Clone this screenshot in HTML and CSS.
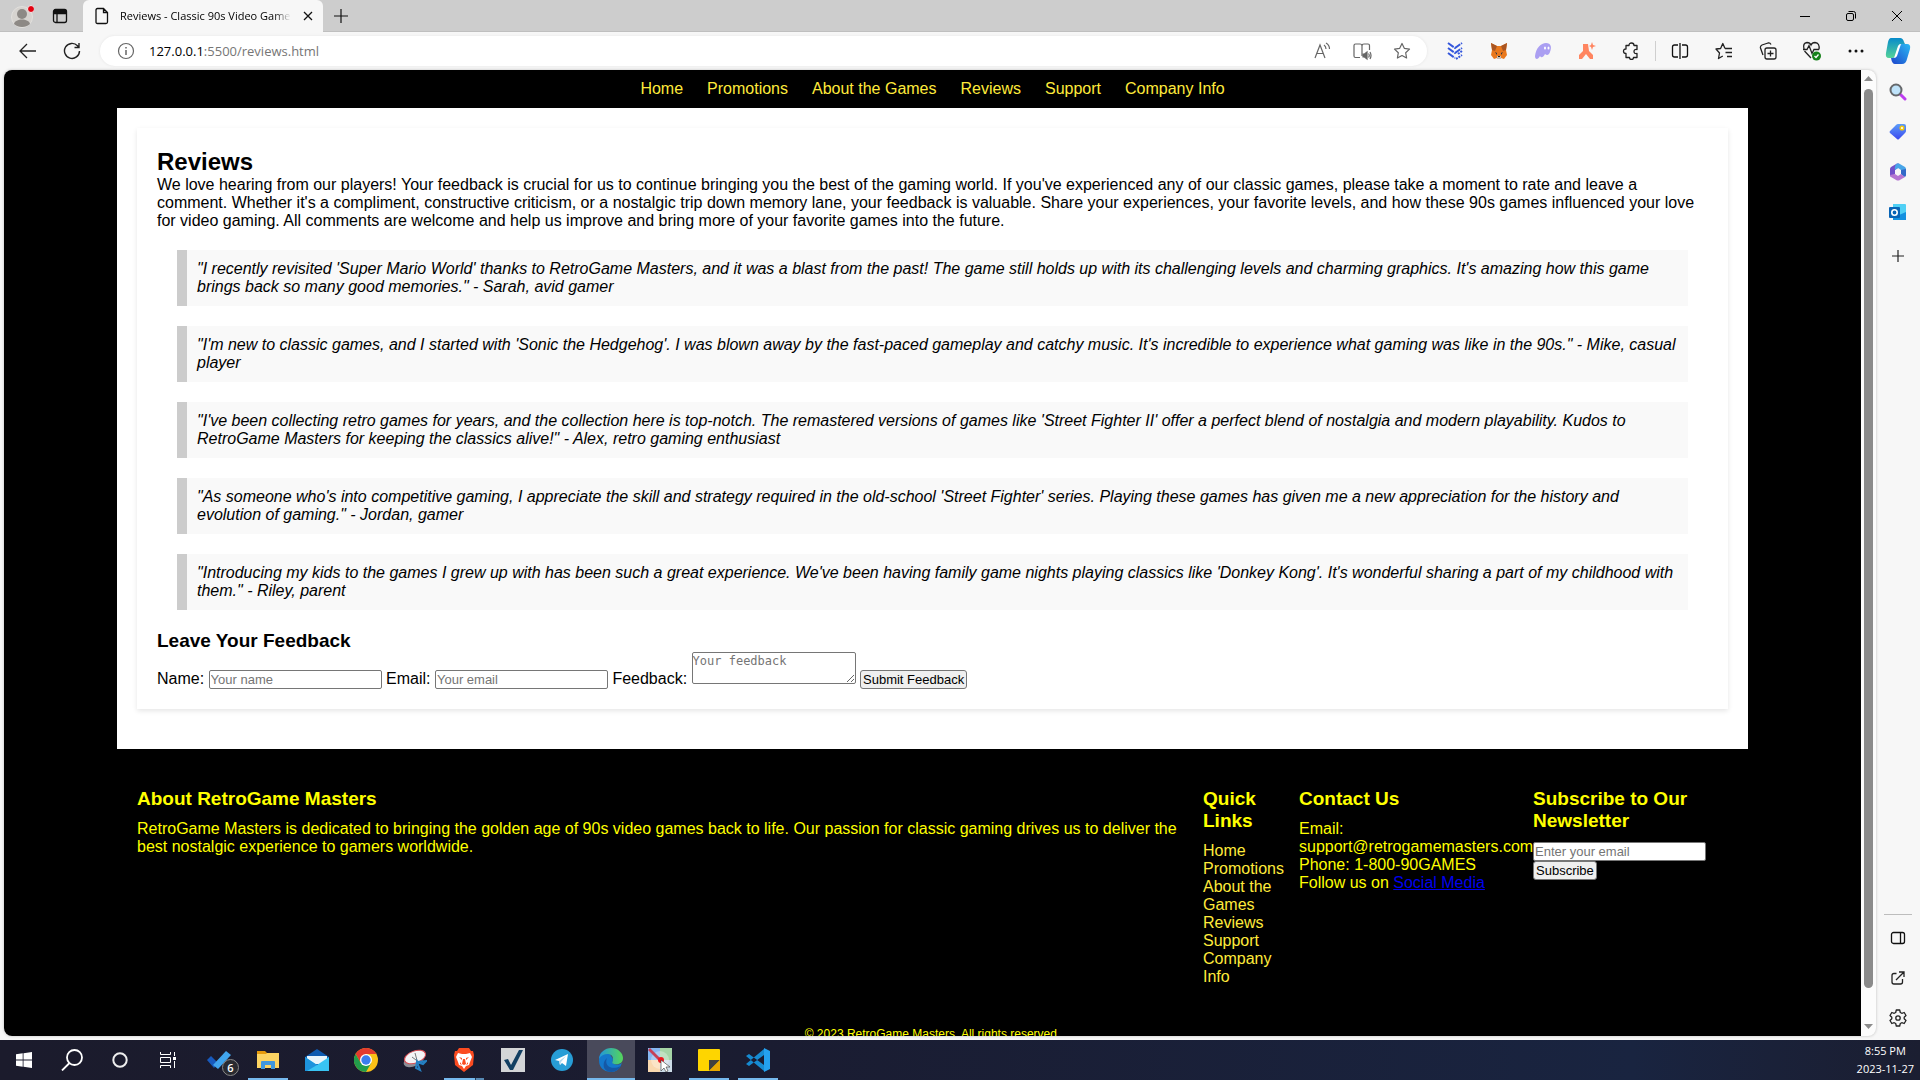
FILE: index.html
```html
<!DOCTYPE html>
<html lang="en">
<head>
<meta charset="utf-8">
<title>Reviews - Classic 90s Video Games</title>
<link rel="stylesheet" href="styles.css">
</head>
<body>
<div class="tabstrip">
  <button class="profile" aria-label="Profile"><svg width="24" height="24" viewBox="0 0 24 24"><circle cx="12" cy="13" r="10.5" fill="#d6d3cf" stroke="#e2e0dd"/><circle cx="12" cy="10" r="5" fill="#8d8985"/><path d="M4 20c1-6 15-6 16 0-4 4-12 4-16 0z" fill="#8d8985"/><circle cx="21" cy="5" r="3.5" fill="#e3000f" stroke="#eee"/></svg></button>
  <button class="workspaces" aria-label="Tab actions"><svg width="16" height="16" viewBox="0 0 16 16" fill="none" stroke="#111" stroke-width="1.3"><rect x="1.5" y="1.5" width="13" height="13" rx="2"/><path d="M1.5 5.5h13M5 5v9"/><path d="M2 3.5h12" stroke-width="4"/></svg></button>
  <div class="tab">
    <svg width="14" height="18" viewBox="0 0 14 18" fill="none" stroke="#111" stroke-width="1.3"><path d="M2.500 1.500h6l4 4v9.500q0 1.500-1.500 1.500h-8.500q-1.500 0-1.500-1.500v-12q0-1.500 1.500-1.500zM8.500 1.500v4h4"/></svg>
    <span class="tab-title">Reviews - Classic 90s Video Games</span>
    <button class="tab-close" aria-label="Close tab"><svg width="10" height="10" viewBox="0 0 10 10" stroke="#111" stroke-width="1.300"><path d="M1 1l8 8M9 1l-8 8"/></svg></button>
  </div>
  <button class="newtab" aria-label="New tab"><svg width="16" height="16" viewBox="0 0 16 16" stroke="#111" stroke-width="1.200"><path d="M8 1v14M1 8h14"/></svg></button>
  <div class="window-controls">
    <button aria-label="Minimize"><svg width="12" height="12" viewBox="0 0 12 12" stroke="#000"><path d="M1 6.500h10"/></svg></button>
    <button aria-label="Restore"><svg width="12" height="12" viewBox="0 0 12 12" fill="none" stroke="#000"><rect x="1.500" y="3.500" width="7" height="7" rx="1.500"/><path d="M3.500 1.500h5q2 0 2 2v5"/></svg></button>
    <button aria-label="Close"><svg width="12" height="12" viewBox="0 0 12 12" stroke="#000"><path d="M1 1l10 10M11 1L1 11"/></svg></button>
  </div>
</div>

<div class="toolbar">
  <button class="tool" aria-label="Back"><svg width="20" height="18" viewBox="0 0 20 18" fill="none" stroke="#222" stroke-width="1.300"><path d="M18 9H2M9 2L2 9l7 7"/></svg></button>
  <button class="tool" aria-label="Refresh"><svg width="18" height="18" viewBox="0 0 18 18" fill="none" stroke="#222" stroke-width="1.400"><path d="M16.500 9a7.500 7.500 0 1 1-2-5.200L16 5.500M16 1v4.500h-4.500"/></svg></button>
  <div class="address">
    <svg width="18" height="18" viewBox="0 0 18 18" fill="none" stroke="#666" stroke-width="1.200"><circle cx="9" cy="9" r="7.500"/><path d="M9 8v5M9 5v1.500" stroke-width="1.500"/></svg>
    <span class="url">127.0.0.1<span class="url-path">:5500/reviews.html</span></span>
    <div class="address-tools">
      <button aria-label="Read aloud"><svg width="18" height="18" viewBox="0 0 18 18" fill="none" stroke="#666" stroke-width="1.200"><path d="M2 16L7 3l5 13M4 11.500h6M11 3q2 1.500 2 4M13 1q3.500 2 3.500 6"/></svg></button>
      <button aria-label="Immersive reader"><svg width="20" height="20" viewBox="0 0 20 20" fill="none" stroke="#666" stroke-width="1.200"><path d="M8 16.500H3.500q-1.500 0-1.500-1.500V4.500Q2 3 3.500 3H8q2 0 2 2 0-2 2-2h4q1.500 0 1.500 1.500V9M10 5v10"/><path d="M11 13h1.500l2.500-2v7l-2.500-2H11z" fill="#666"/><path d="M16.500 12.500q1.500 2 0 4M18 11q2 3.500 0 7"/></svg></button>
      <button aria-label="Favorite"><svg width="18" height="18" viewBox="0 0 18 18" fill="none" stroke="#666" stroke-width="1.200" stroke-linejoin="round"><path d="M9 1.500l2.300 4.800 5.200.8-3.800 3.700.9 5.200L9 13.500 4.400 16l.9-5.200L1.500 7.100l5.200-.8z"/></svg></button>
    </div>
  </div>
  <div class="extensions">
    <button class="tool" aria-label="Extension"><svg width="16" height="18" viewBox="0 0 16 18" fill="none" stroke="#3457dc" stroke-width="2"><path d="M1 1l7 5 7-5M1 6l7 5 7-5M1 11l7 5" stroke-dasharray="7 1"/><path d="M11 12l4-3M9 17l6-4" stroke-dasharray="2 1"/></svg></button>
    <button class="tool" aria-label="MetaMask"><svg width="18" height="18" viewBox="0 0 18 18"><path d="M1 1l6 3h4l6-3-1 7 1 5-3 4-3-1H7l-3 1-3-4 1-5z" fill="#e9781c"/><path d="M1 1l6 3-2 5-3-1zM17 1l-6 3 2 5 3-1z" fill="#a95522"/><path d="M5 10l2 1v2zM13 10l-2 1v2z" fill="#263345"/><path d="M7 14h4v3H7z" fill="#c9bdb2"/><path d="M8 14h2v1H8z" fill="#222"/></svg></button>
    <button class="tool" aria-label="Phantom"><svg width="18" height="18" viewBox="0 0 18 18"><path d="M1 14C2 6 7 1 12 1c5 0 6 4 4 9-1 3-3 4-5 2-2 4-4 4-5 2-2 4-5 4-5 0z" fill="#ab9ff2"/><ellipse cx="11" cy="6" rx="1" ry="1.500" fill="#fff"/><ellipse cx="14.500" cy="6" rx="1" ry="1.500" fill="#fff"/></svg></button>
    <button class="tool" aria-label="Extension"><svg width="18" height="18" viewBox="0 0 18 18" fill="#ff8560"><path d="M5 2h5l1 7 4 4v4h-3l-4-5-4 5H1v-4l4-4zM14 0l1 3 3 1-3 1-1 3-1-3-2-1 2-1z"/></svg></button>
    <button class="tool" aria-label="Extensions"><svg width="18" height="18" viewBox="0 0 18 18" fill="none" stroke="#222" stroke-width="1.300"><path d="M4 3.500h3q0-2.500 2.500-2.500T12 3.500h3v4q-3-.5-3 2t3 2v4h-3.500q0 2-2 2t-2-2H4v-4q-2.500 0-2.500-2.300T4 7z" stroke-linejoin="round"/></svg></button>
    <span class="divider"></span>
    <button class="tool" aria-label="Split screen"><svg width="18" height="18" viewBox="0 0 18 18" fill="none" stroke="#111" stroke-width="1.300"><path d="M7 3H3.500Q1.500 3 1.500 5v8q0 2 2 2H7M11 3h3.500q2 0 2 2v8q0 2-2 2H11M9 1v16"/></svg></button>
    <button class="tool" aria-label="Favorites"><svg width="18" height="18" viewBox="0 0 18 18" fill="none" stroke="#222" stroke-width="1.300"><path d="M10 6.500L7.800 1.500 5.600 6.500 1 7l3.500 4-1 5.500L7.800 14M10 6.500h7M10.500 10.500H17M12 14.500h5" stroke-linejoin="round"/></svg></button>
    <button class="tool" aria-label="Collections"><svg width="18" height="18" viewBox="0 0 18 18" fill="none" stroke="#222" stroke-width="1.300"><rect x="6" y="6" width="11" height="11" rx="2"/><path d="M11.500 8.500v6M8.500 11.500h6M4 13l-2.500-7Q1 4 3 3l6-2q2-.5 3 1.500"/></svg></button>
    <button class="tool" aria-label="Browser essentials"><svg width="20" height="20" viewBox="0 0 20 20" fill="none" stroke="#222" stroke-width="1.300"><path d="M9 17L2.500 10M2 8q-1.500-6 3-6.500 3 0 4 2.500 1-2.500 4-2.500 5 .5 4 7M1 8.500h4l2-4 3 8 2-4h5"/><circle cx="14.500" cy="15" r="4.500" fill="#16811a" stroke="none"/><path d="M12.500 15l1.500 1.500 2.500-3" stroke="#fff"/></svg></button>
    <button class="tool" aria-label="Settings and more"><svg width="16" height="4" viewBox="0 0 16 4" fill="#111"><circle cx="2" cy="2" r="1.500"/><circle cx="8" cy="2" r="1.500"/><circle cx="14" cy="2" r="1.500"/></svg></button>
  </div>
  <button class="copilot" aria-label="Copilot"><svg width="26" height="28" viewBox="0 0 26 28"><defs><linearGradient id="cp1" x1="0" y1="0" x2="0" y2="1"><stop offset="0" stop-color="#078bcb"/><stop offset="1" stop-color="#54d398"/></linearGradient><linearGradient id="cp2" x1="0" y1="1" x2="1" y2="0"><stop offset="0" stop-color="#1d45cc"/><stop offset="1" stop-color="#2abaf4"/></linearGradient></defs><path d="M6 1h9q3 0 4 4l1 2h-4q-2 0-3 4l-2 7q-1 3-4 3H4q-4 0-3-5L3 5q1-4 3-4z" fill="url(#cp1)"/><path d="M20 7h2q4 0 3 5l-3 10q-1 5-5 5h-7q-3 0-4-6h2q2 0 3-3l2-7q1-4 4-4z" fill="url(#cp2)"/><path d="M13 9q1-2 3-2l-4 12q-1 2-3 2z" fill="#fff"/></svg></button>
</div>

<div class="workspace">
  <div class="viewport">
    <div class="page">
      <nav class="site-nav">
        <a href="#home">Home</a><a href="#promotions">Promotions</a><a href="#games">About the Games</a><a href="#reviews">Reviews</a><a href="#support">Support</a><a href="#company">Company Info</a>
      </nav>
      <main class="content">
        <section class="card" id="reviews">
          <h1>Reviews</h1>
          <p>We love hearing from our players! Your feedback is crucial for us to continue bringing you the best of the gaming world. If you've experienced any of our classic games, please take a moment to rate and leave a comment. Whether it's a compliment, constructive criticism, or a nostalgic trip down memory lane, your feedback is valuable. Share your experiences, your favorite levels, and how these 90s games influenced your love for video gaming. All comments are welcome and help us improve and bring more of your favorite games into the future.</p>
          <blockquote>"I recently revisited 'Super Mario World' thanks to RetroGame Masters, and it was a blast from the past! The game still holds up with its challenging levels and charming graphics. It's amazing how this game brings back so many good memories." - Sarah, avid gamer</blockquote>
          <blockquote>"I'm new to classic games, and I started with 'Sonic the Hedgehog'. I was blown away by the fast-paced gameplay and catchy music. It's incredible to experience what gaming was like in the 90s." - Mike, casual player</blockquote>
          <blockquote>"I've been collecting retro games for years, and the collection here is top-notch. The remastered versions of games like 'Street Fighter II' offer a perfect blend of nostalgia and modern playability. Kudos to RetroGame Masters for keeping the classics alive!" - Alex, retro gaming enthusiast</blockquote>
          <blockquote>"As someone who's into competitive gaming, I appreciate the skill and strategy required in the old-school 'Street Fighter' series. Playing these games has given me a new appreciation for the history and evolution of gaming." - Jordan, gamer</blockquote>
          <blockquote>"Introducing my kids to the games I grew up with has been such a great experience. We've been having family game nights playing classics like 'Donkey Kong'. It's wonderful sharing a part of my childhood with them." - Riley, parent</blockquote>
          <h2>Leave Your Feedback</h2>
          <form class="feedback">
            <label for="name">Name:</label>
            <input class="field" type="text" id="name" placeholder="Your name">
            <label for="email">Email:</label>
            <input class="field" type="email" id="email" placeholder="Your email">
            <label for="feedback">Feedback:</label>
            <textarea id="feedback" placeholder="Your feedback"></textarea>
            <button class="action" type="submit">Submit Feedback</button>
          </form>
        </section>
      </main>
      <footer class="site-footer">
        <div class="footer-columns">
          <section class="about">
            <h2>About RetroGame Masters</h2>
            <p>RetroGame Masters is dedicated to bringing the golden age of 90s video games back to life. Our passion for classic gaming drives us to deliver the best nostalgic experience to gamers worldwide.</p>
          </section>
          <section class="links">
            <h2>Quick Links</h2>
            <ul>
              <li><a href="#home">Home</a></li>
              <li><a href="#promotions">Promotions</a></li>
              <li><a href="#games">About the Games</a></li>
              <li><a href="#reviews">Reviews</a></li>
              <li><a href="#support">Support</a></li>
              <li><a href="#company">Company Info</a></li>
            </ul>
          </section>
          <section>
            <h2>Contact Us</h2>
            <p>Email: support@retrogamemasters.com</p>
            <p>Phone: 1-800-90GAMES</p>
            <p>Follow us on <a class="social" href="#social">Social Media</a></p>
          </section>
          <section>
            <h2>Subscribe to Our Newsletter</h2>
            <form class="subscribe">
              <input class="field" type="email" placeholder="Enter your email" aria-label="Email">
              <button class="action" type="submit">Subscribe</button>
            </form>
          </section>
        </div>
        <p class="copyright">© 2023 RetroGame Masters. All rights reserved.</p>
      </footer>
    </div>
    <div class="scrollbar" aria-hidden="true">
      <svg width="9" height="5" viewBox="0 0 9 5"><path d="M0 5L4.500 0 9 5z" fill="#8b8b8b"/></svg>
      <div class="track"><div class="thumb"></div></div>
      <svg width="9" height="5" viewBox="0 0 9 5"><path d="M0 0h9L4.500 5z" fill="#8b8b8b"/></svg>
    </div>
  </div>
  <aside class="sidebar">
    <button aria-label="Search"><svg width="18" height="18" viewBox="0 0 18 18"><path d="M11 11l5 5" stroke="#bd3df0" stroke-width="3" stroke-linecap="round"/><circle cx="7" cy="7" r="5.500" fill="#bfe3fa" stroke="#66686b" stroke-width="2"/></svg></button>
    <button aria-label="Shopping"><svg width="18" height="18" viewBox="0 0 18 18"><defs><linearGradient id="tg" x1="0" y1="0" x2="0" y2="1"><stop offset="0" stop-color="#5c9df8"/><stop offset="1" stop-color="#3c48ef"/></linearGradient></defs><path d="M9 1h6q2 0 2 2v5q0 1-1 2l-6 6q-1 1-2 0L1 10q-1-1 0-2l6-6q1-1 2-1z" fill="url(#tg)"/><circle cx="13" cy="5" r="1.800" fill="#fff" stroke="#f2c811" stroke-width="1.500"/></svg></button>
    <button aria-label="Microsoft 365"><svg width="18" height="18" viewBox="0 0 18 18"><path d="M1 6q0-1 1-2l6-3.500h2L9 5 6 7v4l-4 3q-1-1-1-2z" fill="#7250c9"/><path d="M8 .5h2L16 4q1 1 1 2v6l-2 2-3-3V7L9 5 6 7q-1-4 2-6.500z" fill="#48a5e8"/><path d="M12 7l5-1v6q0 1-1 2l-4-3z" fill="#3269c8"/><path d="M1 12l5-1 3 2 3-2 4 3-6 3.500H8L2 14q-1-1-1-2z" fill="#b576d2"/></svg></button>
    <button aria-label="Outlook"><svg width="18" height="18" viewBox="0 0 18 18"><path d="M4 1h12q1 0 1 1v14H4z" fill="#50d0f5"/><path d="M4 9l6 3 7-3v8H4z" fill="#1490df"/><rect y="4" width="11" height="11" rx="1" fill="#0864b6"/><circle cx="5.500" cy="9.500" r="2.700" fill="none" stroke="#fff" stroke-width="1.600"/></svg></button>
    <button class="add" aria-label="Customize"><svg width="14" height="14" viewBox="0 0 14 14" stroke="#222" stroke-width="1.200"><path d="M7 1v12M1 7h12"/></svg></button>
    <hr>
    <button aria-label="Hide sidebar"><svg width="16" height="16" viewBox="0 0 16 16" fill="none" stroke="#111" stroke-width="1.300"><rect x="1.500" y="2.500" width="13" height="11" rx="2"/><path d="M10.500 2.500v11"/></svg></button>
    <button aria-label="Open link"><svg width="16" height="16" viewBox="0 0 16 16" fill="none" stroke="#222" stroke-width="1.300"><path d="M6.500 3.500H4q-2 0-2 2V12q0 2 2 2h6.500q2 0 2-2V9M6 10l7.500-7.500M9 2h5v5"/></svg></button>
    <button aria-label="Settings"><svg width="18" height="18" viewBox="0 0 18 18" fill="none" stroke="#222" stroke-width="1.300" stroke-linejoin="round"><path d="M7.300 1h3.400l.6 2.500 1.500.8 2.400-.8 1.800 3-1.800 1.700v1.600l1.800 1.700-1.800 3-2.400-.8-1.500.8-.6 2.500H7.300l-.6-2.500-1.500-.8-2.400.8-1.800-3 1.800-1.700V8.200L1 6.500l1.800-3 2.400.8 1.500-.8z"/><circle cx="9" cy="9" r="2.200"/></svg></button>
  </aside>
</div>

<div class="taskbar">
  <button aria-label="Start"><svg width="16" height="16" viewBox="0 0 16 16" fill="#fff"><path d="M0 2.300L6.700 1.300v6.300H0zM7.500 1.200L16 0v7.600H7.500zM0 8.400h6.700v6.300L0 13.700zM7.500 8.400H16V16l-8.500-1.200z"/></svg></button>
  <button aria-label="Search"><svg width="22" height="22" viewBox="0 0 22 22" fill="none" stroke="#fff" stroke-width="1.800"><circle cx="13.500" cy="8.500" r="7.500"/><path d="M8.500 14L1 21.500"/></svg></button>
  <button aria-label="Cortana"><svg width="16" height="16" viewBox="0 0 16 16" fill="none" stroke="#eee" stroke-width="2"><circle cx="8" cy="8" r="6.700"/></svg></button>
  <button aria-label="Task view"><svg width="16" height="16" viewBox="0 0 16 16" fill="none" stroke="#fff"><path d="M.5 0v2.500h10V0M.5 16v-2.500h10V16M.5 5.500h10v5H.5zM14.500 0v4M14.500 9v7"/><path d="M13 6.500h3" stroke-width="3"/></svg></button>
  <div class="apps">
    <button aria-label="To Do"><svg width="24" height="20" viewBox="0 0 24 20"><path d="M0 10l4-4 7 7-4 5z" fill="#185abd"/><path d="M6 15L19 1l5 4L11 19z" fill="#41a5ee"/></svg><span class="badge">6</span></button>
    <button class="running" aria-label="File Explorer"><svg width="22" height="20" viewBox="0 0 22 20"><path d="M0 1h8l2 2h12v15H0z" fill="#e69b0c"/><path d="M0 4h9l1-1h12v15H0z" fill="#fcd462"/><path d="M4 19v-7q0-1 1-1h12q1 0 1 1v7h-4v-4H8v4z" fill="#3f97de"/></svg></button>
    <button aria-label="Mail"><svg width="24" height="24" viewBox="0 0 24 24"><path d="M0 9l12-8 12 8v14H0z" fill="#0f5bb0"/><path d="M2 8h20v8H2z" fill="#eaf5fb"/><path d="M0 9l12 8L24 9v14H0z" fill="#39c4f3"/><path d="M0 9l12 8-10 6H0z" fill="#1d93dd"/></svg></button>
    <button aria-label="Chrome"><svg width="24" height="24" viewBox="0 0 24 24"><circle cx="12" cy="12" r="12" fill="#fbc116"/><path d="M1.600 6A12 12 0 0 1 22.400 6H12l-5.200 9z" fill="#e33b2e"/><path d="M1.600 6A12 12 0 0 0 12 24l5.200-9H6.800z" fill="#229d4b"/><circle cx="12" cy="12" r="6" fill="#fff"/><circle cx="12" cy="12" r="4.700" fill="#3b7ded"/></svg></button>
    <button aria-label="Snipping Tool"><svg width="24" height="24" viewBox="0 0 24 24" fill="none"><ellipse cx="11" cy="12" rx="11" ry="6" fill="#8c8f98" transform="rotate(-25 11 12)"/><ellipse cx="12" cy="9" rx="11" ry="6" fill="#f4f4f6" stroke="#d84b52" transform="rotate(-20 12 9)"/><path d="M12 5l3 11M9 9l8 6" stroke="#777"/><path d="M14 14l9-1-3 3zM14 14l-1 6 4 2z" stroke="#2580c3" stroke-width="2"/></svg></button>
    <button class="running multi" aria-label="Brave"><svg width="22" height="24" viewBox="0 0 22 24"><path d="M6 0h10l2 3h2l1 4-1 10-9 7-9-7L1 7l1-4h2z" fill="#fb4b20"/><path d="M5 5l4 1h4l4-1 2 4-2 5-1 3-3 1-2 3-2-3-3-1-1-3-2-5z" fill="#fff"/><path d="M6 9l3 1v2zM16 9l-3 1v2zM10 11h2l1 5-2 1-2-1zM7 14l2 3-2-1zM15 14l-2 3 2-1z" fill="#fb4b20"/></svg></button>
    <button aria-label="Checklist"><svg width="24" height="24" viewBox="0 0 24 24"><path d="M0 0h24v24H0z" fill="#d3d5d7"/><path d="M3 12l4-1 3 6L18 2h4L12 22H9z" fill="#123f62"/></svg></button>
    <button aria-label="Telegram"><svg width="22" height="22" viewBox="0 0 22 22"><circle cx="11" cy="11" r="11" fill="#279dd6"/><path d="M4 11l13-6-2 12-4-3-2 2-1-4z" fill="#fff"/><path d="M8 12l7-5-5 6-1 3z" fill="#b4d9ed"/></svg></button>
    <button class="running current" aria-label="Edge"><svg width="24" height="24" viewBox="0 0 24 24"><defs><linearGradient id="ed"><stop stop-color="#2196db"/><stop offset="1" stop-color="#55d65a"/></linearGradient></defs><path d="M0 12C0 4 5 2 9 3l5 8q-1 4 1 5 4 2 8-1-3 9-11 9Q0 23 0 12z" fill="#1478cb"/><path d="M0 11C1 4 6 0 12 0c7 0 12 5 12 10 0 5-4 7-9 6-3-1-1-2-1-5 0-7-11-6-14 0z" fill="url(#ed)"/><path d="M8 10c-3 7 3 13 14 8-4 6-9 7-14 5-5-3-4-10 0-13z" fill="#1558a5"/></svg></button>
    <button aria-label="Color picker"><svg width="24" height="24" viewBox="0 0 24 24"><path d="M0 0h12v12H0z" fill="#86b7f1"/><path d="M12 0h12v12H12z" fill="#a5d5a6"/><path d="M0 12h12v12H0z" fill="#f9d8af"/><path d="M12 12h12v12H12z" fill="#cddce8"/><circle cx="12" cy="12" r="9" fill="#fff" opacity=".3"/><path d="M0 2l2-2 11 11-2 2z" fill="#c64159"/><circle cx="13" cy="12" r="3" fill="#ed1820"/><path d="M13 12v11l3-3 2 4 2-1-2-4h4z" fill="#fff" stroke="#333" stroke-width=".6"/></svg></button>
    <button class="running" aria-label="Sticky Notes"><svg width="22" height="22" viewBox="0 0 22 22"><rect width="22" height="22" rx="1" fill="#fed500"/><path d="M11 22V11h11z" fill="#41413e"/><path d="M11 22l11-11v11z" fill="#e8a900"/></svg></button>
    <button class="running" aria-label="Visual Studio Code"><svg width="24" height="24" viewBox="0 0 24 24" fill="none"><path d="M0 8l3-2 15 11v6zM0 16l3 2L18 7V1z" fill="#168bd2"/><path d="M18 0l6 3v18l-6 3z" fill="#24a1ef"/></svg></button>
  </div>
  <div class="clock"><span>8:55 PM</span><span>2023-11-27</span></div>
</div>
</body>
</html>
```

FILE: styles.css
```css
* { box-sizing: border-box; margin: 0; padding: 0; }

body {
  display: flex;
  flex-direction: column;
  height: 100vh;
  overflow: hidden;
  background: #f7f7f7;
  font-family: "Liberation Sans", Arial, sans-serif;
  font-size: 16px;
  line-height: 18px;
}

svg { display: block; flex: none; }
button { font: inherit; }

.tabstrip button, .toolbar button, .sidebar button, .taskbar button {
  display: flex;
  align-items: center;
  justify-content: center;
  flex: none;
  border: 0;
  background: none;
}

/* Browser tab strip */
.tabstrip {
  display: flex;
  align-items: stretch;
  height: 32px;
  background: #cdcdcd;
  box-shadow: inset 0 -1px #bfbfbf;
}
.profile { width: 44px; }
.workspaces { width: 32px; }
.tab {
  display: flex;
  align-items: center;
  gap: 11px;
  width: 240px;
  margin-left: 7px;
  padding: 0 9px 0 12px;
  border-radius: 6px 6px 0 0;
  background: #f7f7f7;
}
.tab-title {
  flex: 1;
  overflow: hidden;
  white-space: nowrap;
  font-family: "Open Sans", "Noto Sans", sans-serif;
  font-size: 11px;
  mask-image: linear-gradient(to right, #000 90%, transparent);
}
.tabstrip .tab-close { width: 12px; }
.newtab { width: 36px; }
.window-controls { display: flex; margin-left: auto; }
.window-controls button { width: 46px; }

/* Browser toolbar */
.toolbar {
  display: flex;
  align-items: center;
  height: 38px;
  padding: 0 2px 0 6px;
}
.toolbar .tool { width: 44px; height: 32px; }
.toolbar .copilot { width: 40px; height: 32px; }
.address {
  display: flex;
  flex: 1;
  align-items: center;
  height: 30px;
  margin-left: 6px;
  padding: 0 5px 0 17px;
  border-radius: 15px;
  background: #fff;
  box-shadow: 0 0 3px #e4e4e4;
}
.url {
  margin-left: 14px;
  font-family: "Open Sans", "Noto Sans", sans-serif;
  font-size: 13px;
}
.url-path { color: #767676; }
.address-tools { display: flex; margin-left: auto; }
.address-tools button { width: 40px; }
.extensions { display: flex; align-items: center; padding-left: 6px; }
.divider { width: 1px; height: 20px; margin: 0 2px; background: #cfcfcf; }

/* Page area and browser sidebar */
.workspace { display: flex; flex: 1; min-height: 0; }
.viewport {
  display: flex;
  flex: 1;
  margin: 0 0 4px 4px;
  overflow: hidden;
  border-radius: 8px;
  background: #fcfcfc;
  box-shadow: 0 0 3px #bbb;
}
.page { flex: 1; overflow: hidden; background: #000; }
.scrollbar {
  display: flex;
  flex-direction: column;
  align-items: center;
  justify-content: space-between;
  gap: 8px;
  width: 15px;
  padding: 6px 0 7px;
}
.track { flex: 1; width: 9px; }
.thumb { height: 97%; border-radius: 5px; background: #8b8b8b; }
.sidebar {
  display: flex;
  flex-direction: column;
  align-items: center;
  width: 44px;
  padding: 2px 0;
}
.sidebar button { width: 44px; height: 40px; }
.sidebar .add { height: 48px; margin-bottom: auto; }
.sidebar hr { width: 28px; margin-bottom: 3px; border: 0; border-top: 1px solid #bdbdbd; }

/* Site */
.site-nav { display: flex; justify-content: center; gap: 24px; padding: 10px 0; }
.site-nav a, .links a { color: #ffeb3b; text-decoration: none; }
.content { margin: 0 113px; padding: 20px; background: #fff; }
.card {
  margin-bottom: 20px;
  padding: 20px;
  box-shadow: 0 2px 5px rgba(0, 0, 0, 0.1);
}
h1 { font-size: 24px; line-height: 28px; }
h2 { font-size: 19px; line-height: 22px; }
blockquote {
  margin: 20px;
  padding: 10px;
  border-left: 10px solid #ccc;
  background: #f9f9f9;
  font-style: italic;
}
.field {
  width: 173px;
  height: 19px;
  padding: 0 1px;
  border: 1px solid #767676;
  border-radius: 2px;
  font: 13px "Liberation Sans", Arial, sans-serif;
}
.field::placeholder, textarea::placeholder { color: #757575; }
textarea {
  width: 164px;
  height: 32px;
  border: 1px solid #767676;
  border-radius: 2px;
  font: 12px/16px "DejaVu Sans Mono", monospace;
}
.action {
  height: 19px;
  padding: 0 2px;
  border: 1px solid #767676;
  border-radius: 3px;
  background: #efefef;
  font-size: 13px;
  line-height: 17px;
}

.site-footer { padding: 39px 133px 0; color: #ff0; }
.footer-columns {
  display: grid;
  grid-template-columns: 1fr 96px 234px 195px;
}
.about, .links { padding-right: 20px; }
.links ul { list-style: none; }
.footer-columns h2 { margin-bottom: 10px; }
.social { color: #0000ee; }
.subscribe { display: flex; flex-direction: column; align-items: flex-start; }
.copyright { padding-top: 39px; text-align: center; font-size: 12px; }

/* Desktop taskbar */
.taskbar {
  display: flex;
  height: 40px;
  background: linear-gradient(to right, #1b1b2c, #1a1c31 40%, #192440 85%, #1b1e31);
  color: #fff;
  font-family: "Open Sans", "Noto Sans", sans-serif;
}
.taskbar button { position: relative; width: 48px; color: #fff; }
.apps { display: flex; gap: 1px; margin-left: 3px; }
.taskbar .running { background: linear-gradient(#76b9ed, #76b9ed) center bottom / 40px 2px no-repeat; }
.taskbar .multi { background-image: linear-gradient(to right, #76b9ed 31px, #253b55 31px, #253b55 32px, #5789b3 32px); }
.taskbar .current { background-color: #494a5b; background-size: 48px 2px; }
.badge {
  position: absolute;
  right: 4px;
  bottom: 4px;
  width: 17px;
  height: 17px;
  border: 1px solid #888;
  border-radius: 50%;
  background: #292a30;
  font-size: 11px;
  font-weight: 600;
  line-height: 15px;
  text-align: center;
}
.clock {
  display: flex;
  flex-direction: column;
  justify-content: center;
  margin-left: auto;
  padding-right: 6px;
  font-size: 11px;
  text-align: center;
}
```
